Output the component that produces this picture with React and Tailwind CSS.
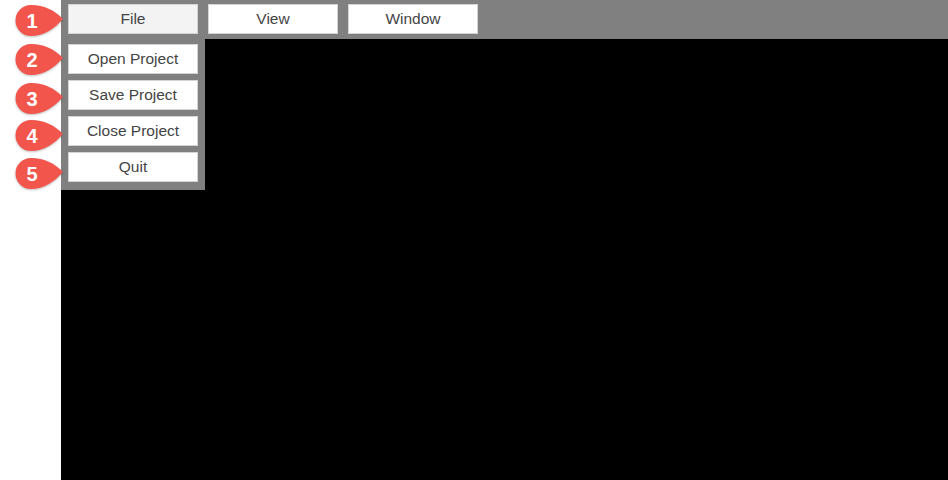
import React from "react";

const font = { fontFamily: '"Liberation Sans", Arial, sans-serif' };

function Badge({ n, top }) {
  return (
    <div className="absolute left-[13px] w-[52px] h-[36px]" style={{ top }}>
      <svg width="52" height="36" viewBox="0 0 52 36" className="absolute inset-0 drop-shadow-[0_1px_1px_rgba(0,0,0,0.25)]">
        <path
          d="M50 17 C 41 8, 31 3, 18 3 A15.5 15.5 0 1 0 18 34 C 31 34, 41 27, 50 17 Z"
          fill="#f2554b"
        />
      </svg>
      <span className="absolute left-[4px] top-[3px] w-[30px] h-[31px] flex items-center justify-center text-white font-bold text-[20px]">
        {n}
      </span>
    </div>
  );
}

function MenuButton({ label, active }) {
  return (
    <button
      className={`w-[130px] h-[30px] flex items-center justify-center text-[15.5px] text-[#444] border border-[#d4d4d4] ${
        active ? "bg-[#f3f3f3]" : "bg-white"
      }`}
    >
      {label}
    </button>
  );
}

export default function App() {
  return (
    <div className="relative w-[948px] h-[480px] flex overflow-hidden bg-white" style={font}>
      <div className="w-[61px] h-full bg-white" />

      <div className="flex-1 flex flex-col">
        <div className="h-[39px] bg-[#808080] flex items-start gap-[10px] pl-[7px] pt-[4px]">
          <MenuButton label="File" active />
          <MenuButton label="View" />
          <MenuButton label="Window" />
        </div>

        <div className="relative flex-1 bg-black">
          <div className="absolute left-0 top-0 w-[144px] bg-[#808080] flex flex-col gap-[6px] pl-[7px] pt-[5px] pb-[8px]">
            <MenuButton label="Open Project" />
            <MenuButton label="Save Project" />
            <MenuButton label="Close Project" />
            <MenuButton label="Quit" />
          </div>
        </div>
      </div>

      <Badge n="1" top={2} />
      <Badge n="2" top={41} />
      <Badge n="3" top={80} />
      <Badge n="4" top={117} />
      <Badge n="5" top={155} />
    </div>
  );
}
